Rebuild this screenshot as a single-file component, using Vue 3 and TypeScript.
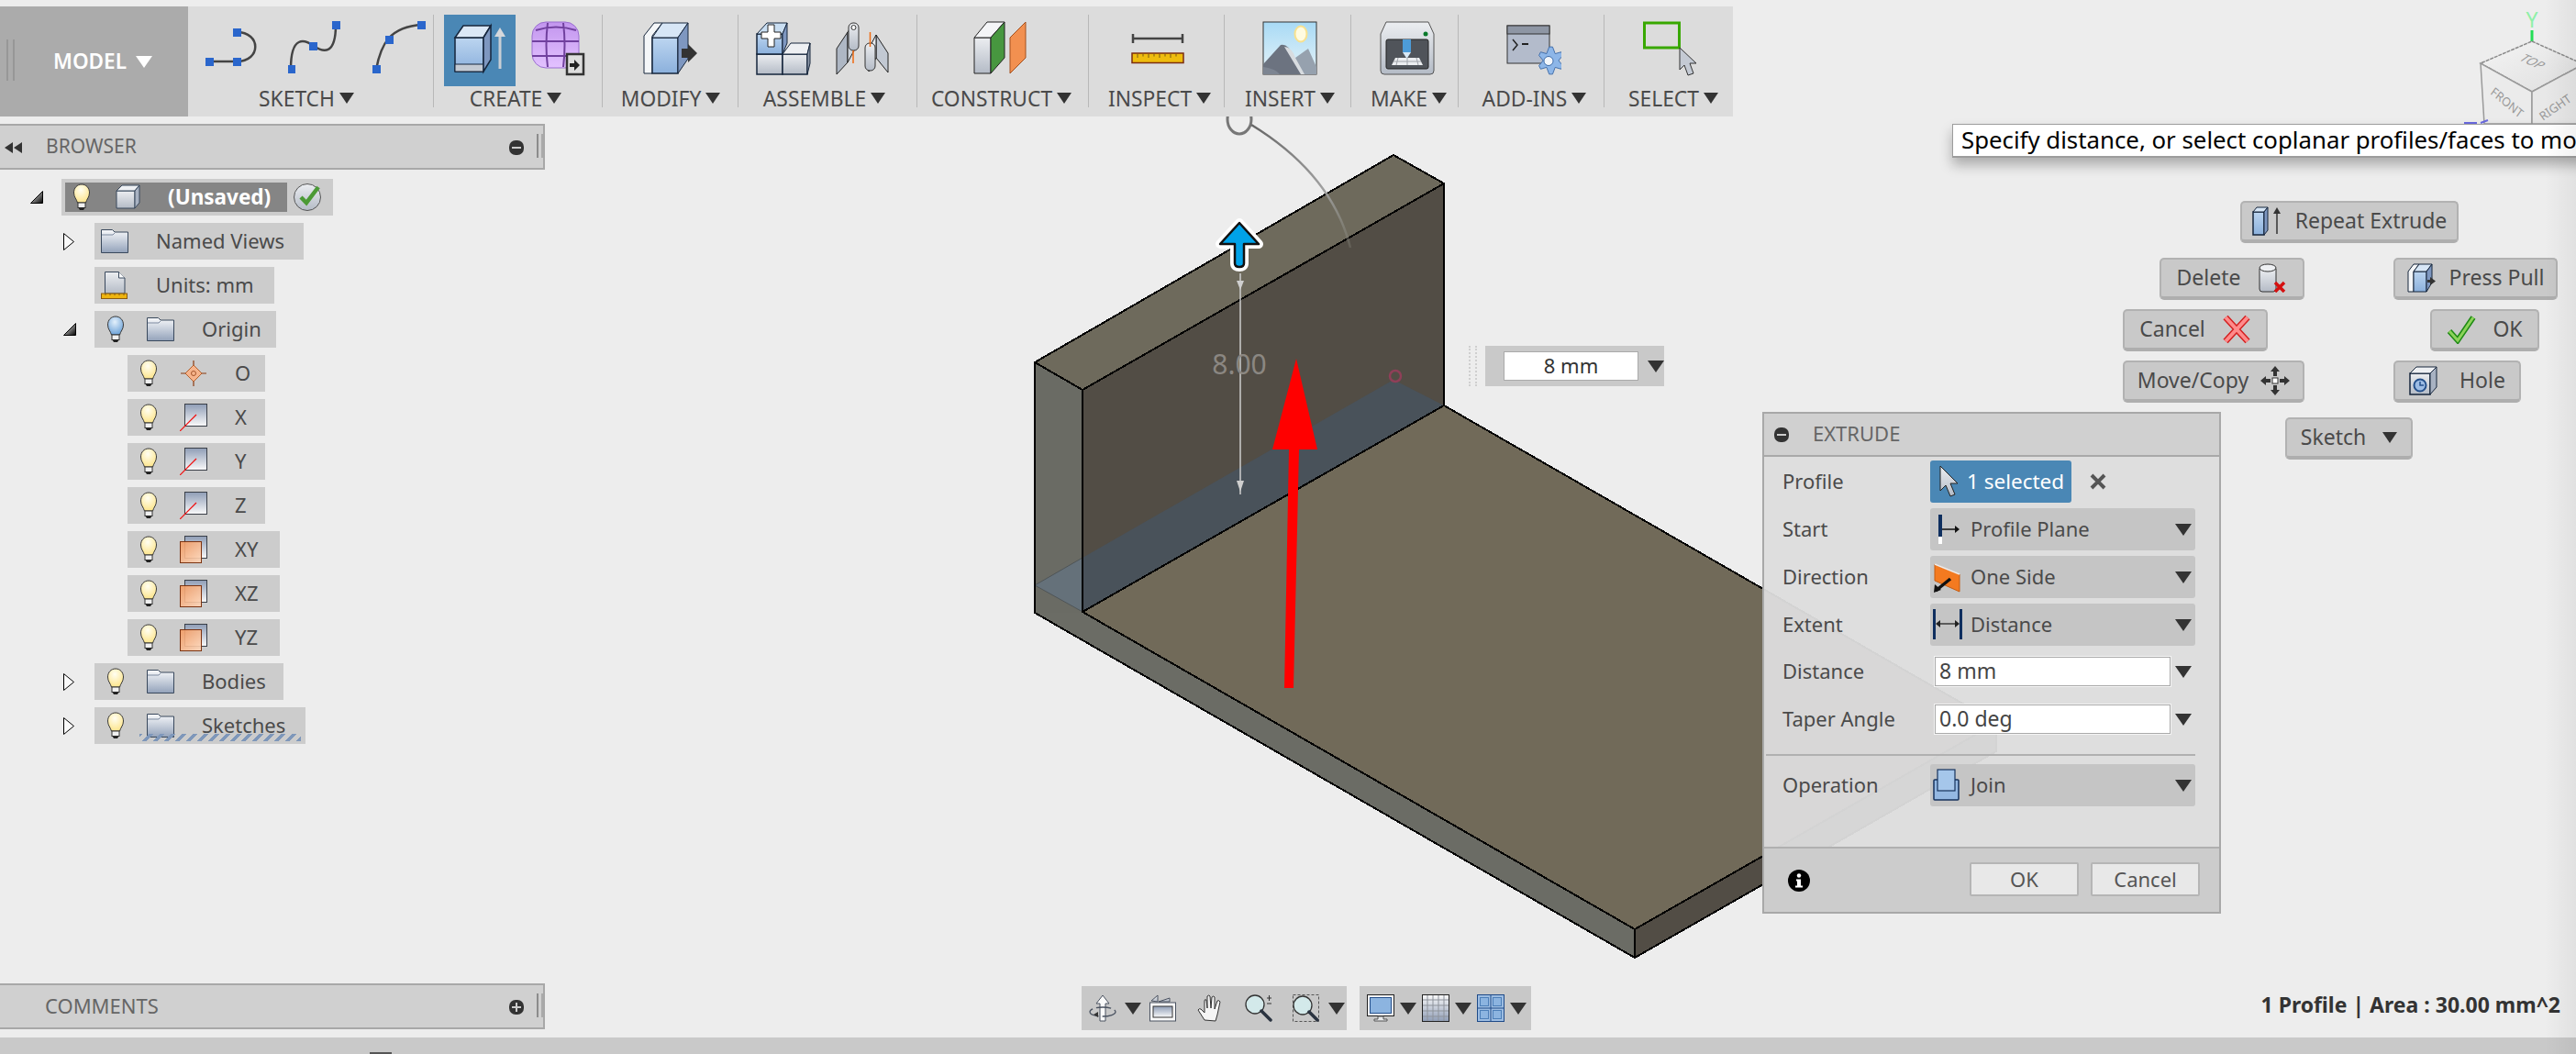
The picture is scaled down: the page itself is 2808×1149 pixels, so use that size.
<script setup lang="ts">
interface ToolGroup {
  label: string
  width: number
  offset: number
  gap: number
  shift: number
  icons: string[]
  active?: boolean
}

interface TreeRow {
  depth: number
  label: string
  width: number
  icon: string
  arrow?: 'open' | 'closed'
  bulb?: 'on' | 'blue'
  dashed?: boolean
}

interface MenuItem {
  label: string
  x: number
  y: number
  w: number
  gap: number
  icon?: string
  iconFirst?: boolean
}

const tools: ToolGroup[] = [
  { label: 'SKETCH', width: 268, offset: 18, gap: 31, shift: -5, icons: ['sk-line', 'sk-spline', 'sk-arc'] },
  { label: 'CREATE', width: 184, offset: 11, gap: 17, shift: -3, icons: ['extrude', 'form'], active: true },
  { label: 'MODIFY', width: 148, offset: 44, gap: 0, shift: 0, icons: ['modify'] },
  { label: 'ASSEMBLE', width: 195, offset: 19, gap: 27, shift: -4, icons: ['add', 'joint'] },
  { label: 'CONSTRUCT', width: 187, offset: 61, gap: 0, shift: -2, icons: ['construct'] },
  { label: 'INSPECT', width: 148, offset: 46, gap: 0, shift: 3, icons: ['inspect'] },
  { label: 'INSERT', width: 138, offset: 41, gap: 0, shift: 2, icons: ['insert'] },
  { label: 'MAKE', width: 117, offset: 31, gap: 0, shift: 4, icons: ['make'] },
  { label: 'ADD-INS', width: 159, offset: 52, gap: 0, shift: 3, icons: ['addin'] },
  { label: 'SELECT', width: 140, offset: 42, gap: 0, shift: 5, icons: ['select'] }
]

const tree: TreeRow[] = [
  { depth: 1, label: 'Named Views', width: 228, icon: 'folder', arrow: 'closed' },
  { depth: 1, label: 'Units: mm', width: 196, icon: 'units' },
  { depth: 1, label: 'Origin', width: 198, icon: 'folder', arrow: 'open', bulb: 'blue' },
  { depth: 2, label: 'O', width: 150, icon: 'point', bulb: 'on' },
  { depth: 2, label: 'X', width: 150, icon: 'axis', bulb: 'on' },
  { depth: 2, label: 'Y', width: 150, icon: 'axis', bulb: 'on' },
  { depth: 2, label: 'Z', width: 150, icon: 'axis', bulb: 'on' },
  { depth: 2, label: 'XY', width: 166, icon: 'plane', bulb: 'on' },
  { depth: 2, label: 'XZ', width: 166, icon: 'plane', bulb: 'on' },
  { depth: 2, label: 'YZ', width: 166, icon: 'plane', bulb: 'on' },
  { depth: 1, label: 'Bodies', width: 206, icon: 'folder', arrow: 'closed', bulb: 'on' },
  { depth: 1, label: 'Sketches', width: 230, icon: 'folder', arrow: 'closed', bulb: 'on', dashed: true }
]

const menu: MenuItem[] = [
  { label: 'Repeat Extrude', x: 2442, y: 219, w: 238, gap: 15, icon: 'm-repeat', iconFirst: true },
  { label: 'Delete', x: 2354, y: 281, w: 158, gap: 19, icon: 'm-delete' },
  { label: 'Press Pull', x: 2609, y: 281, w: 179, gap: 14, icon: 'm-press', iconFirst: true },
  { label: 'Cancel', x: 2314, y: 337, w: 158, gap: 18, icon: 'm-cancel' },
  { label: 'OK', x: 2649, y: 337, w: 119, gap: 18, icon: 'm-ok', iconFirst: true },
  { label: 'Move/Copy', x: 2314, y: 393, w: 198, gap: 13, icon: 'm-move' },
  { label: 'Hole', x: 2609, y: 393, w: 139, gap: 23, icon: 'm-hole', iconFirst: true },
  { label: 'Sketch', x: 2491, y: 455, w: 139, gap: 18 }
]

const selects = [
  { label: 'Start', value: 'Profile Plane', icon: 'e-start' },
  { label: 'Direction', value: 'One Side', icon: 'e-side' },
  { label: 'Extent', value: 'Distance', icon: 'e-dist' }
]
</script>

<template>
  <div class="app">
    <!-- shared icon sprite -->
    <svg class="sprite" width="0" height="0">
      <defs>
        <radialGradient id="gBulbY" cx="0.45" cy="0.3" r="0.7"><stop offset="0" stop-color="#fffef2" /><stop offset="1" stop-color="#fde58c" /></radialGradient>
        <radialGradient id="gBulbB" cx="0.45" cy="0.3" r="0.7"><stop offset="0" stop-color="#e3f0fb" /><stop offset="1" stop-color="#6ea3d8" /></radialGradient>
        <linearGradient id="gFolder" x1="0" y1="0" x2="0" y2="1"><stop offset="0" stop-color="#f8f9fb" /><stop offset="1" stop-color="#93a2ba" /></linearGradient>
        <linearGradient id="gPlane" x1="0" y1="0" x2="0" y2="1"><stop offset="0" stop-color="#8f9db6" /><stop offset="1" stop-color="#fafafa" /></linearGradient>
        <linearGradient id="gOrange" x1="0" y1="0" x2="1" y2="1"><stop offset="0" stop-color="#f39a60" /><stop offset="1" stop-color="#fcd6ba" /></linearGradient>
        <linearGradient id="gBlue" x1="0" y1="0" x2="0" y2="1"><stop offset="0" stop-color="#bcd5f0" /><stop offset="1" stop-color="#8bb0dc" /></linearGradient>
        <linearGradient id="gGray" x1="0" y1="0" x2="0" y2="1"><stop offset="0" stop-color="#eceef1" /><stop offset="1" stop-color="#b4bbc6" /></linearGradient>
        <linearGradient id="gPurple" x1="0" y1="0" x2="0" y2="1"><stop offset="0" stop-color="#c295ee" /><stop offset="1" stop-color="#e3c2ff" /></linearGradient>
        <linearGradient id="gSky" x1="0" y1="0" x2="0" y2="1"><stop offset="0" stop-color="#a8daf5" /><stop offset="1" stop-color="#e6f3f8" /></linearGradient>
        <linearGradient id="gTri" x1="0" y1="0" x2="1" y2="1"><stop offset="0" stop-color="#fff" /><stop offset="1" stop-color="#000" /></linearGradient>
        <linearGradient id="gCube" x1="0" y1="0" x2="1" y2="1"><stop offset="0" stop-color="#f4f4f4" /><stop offset="1" stop-color="#dedede" /></linearGradient>
        <linearGradient id="gCurve" gradientUnits="userSpaceOnUse" x1="1364" y1="136" x2="1472" y2="270">
          <stop offset="0" stop-color="#666" />
          <stop offset="0.6" stop-color="#a0a0a0" />
          <stop offset="1" stop-color="#8a8a80" stop-opacity=".3" />
        </linearGradient>
      </defs>

      <!-- tree icons -->
      <symbol id="bulb-on" viewBox="0 0 20 30">
        <path d="M10 1C5 1 1.500 5 1.500 10c0 5 3 7 4 11h9c1-4 4-6 4-11C18.500 5 15 1 10 1z" fill="url(#gBulbY)" stroke="#3a3a3a" />
        <rect x="6" y="21" width="8" height="5.500" fill="#f0f0f0" stroke="#333" />
        <path d="M6.500 26.500h7L12 29H8z" fill="#222" />
      </symbol>
      <symbol id="bulb-blue" viewBox="0 0 20 30">
        <path d="M10 1C5 1 1.500 5 1.500 10c0 5 3 7 4 11h9c1-4 4-6 4-11C18.500 5 15 1 10 1z" fill="url(#gBulbB)" stroke="#3a3a3a" />
        <rect x="6" y="21" width="8" height="5.500" fill="#f0f0f0" stroke="#333" />
        <path d="M6.500 26.500h7L12 29H8z" fill="#222" />
      </symbol>
      <symbol id="folder" viewBox="0 0 30 26">
        <path d="M.500 25.500V.500h12l2.500 2.500h14.500v22.500z" fill="url(#gFolder)" stroke="#39485c" />
        <path d="M1 6h12l2-2" fill="none" stroke="#7f8ba0" />
      </symbol>
      <symbol id="cube" viewBox="0 0 30 30">
        <path d="M4 8h20v19H4z" fill="url(#gGray)" stroke="#39485c" />
        <path d="M4 8l6-6h19l-5 6z" fill="#eef0f3" stroke="#39485c" />
        <path d="M24 8l5-6v19l-5 6z" fill="#a8b2c2" stroke="#39485c" />
      </symbol>
      <symbol id="units" viewBox="0 0 30 30">
        <path d="M4.500 24V.500h15L26 7v17z" fill="url(#gGray)" stroke="#39485c" />
        <path d="M19.500.500V7H26" fill="#fff" stroke="#39485c" />
        <rect x=".500" y="24" width="28" height="5.500" fill="#eeb40f" stroke="#8a5a10" />
        <path d="M5 24v2M10 24v2M15 24v2M20 24v2M25 24v2" stroke="#8a5a10" />
      </symbol>
      <symbol id="point" viewBox="0 0 30 30">
        <path d="M15 1v28M1 15h28" stroke="#8a3a10" stroke-width="1.200" />
        <path d="M15 6l9 9-9 9-9-9z" fill="#f6b48c" stroke="#b3602d" />
        <circle cx="15" cy="15" r="2.500" fill="none" stroke="#a4552a" />
      </symbol>
      <symbol id="axis" viewBox="0 0 30 30">
        <rect x="5.500" y=".500" width="24" height="24" fill="url(#gPlane)" stroke="#3a3f48" />
        <path d="M0 30L18 12" stroke="#f01010" stroke-width="1.200" />
      </symbol>
      <symbol id="plane" viewBox="0 0 30 30">
        <rect x="5.500" y=".500" width="24" height="24" fill="url(#gPlane)" stroke="#3a3f48" />
        <rect x=".500" y="6.500" width="23" height="23" fill="url(#gOrange)" fill-opacity=".9" stroke="#7c3412" />
      </symbol>

      <!-- toolbar icons -->
      <symbol id="sk-line" viewBox="0 0 60 60">
        <path d="M6 44H35C62 44 62 12 35 12" fill="none" stroke="#444" stroke-width="2.500" />
        <rect x="1" y="40" width="9" height="9" fill="#2a66cc" />
        <rect x="31" y="40" width="9" height="9" fill="#2a66cc" />
        <rect x="31" y="8" width="9" height="9" fill="#2a66cc" />
      </symbol>
      <symbol id="sk-spline" viewBox="0 0 60 60">
        <path d="M3 52C3 15 18 20 28 27 38 34 52 38 52 4" fill="none" stroke="#444" stroke-width="2.500" />
        <rect x="-1" y="48" width="9" height="9" fill="#2a66cc" />
        <rect x="23" y="23" width="9" height="9" fill="#2a66cc" />
        <rect x="48" y="0" width="9" height="9" fill="#2a66cc" />
      </symbol>
      <symbol id="sk-arc" viewBox="0 0 60 60">
        <path d="M5 53C10 25 20 6 55 4" fill="none" stroke="#444" stroke-width="2.500" />
        <rect x="1" y="48" width="9" height="9" fill="#2a66cc" />
        <rect x="15" y="16" width="9" height="9" fill="#2a66cc" />
        <rect x="50" y="0" width="9" height="9" fill="#2a66cc" />
      </symbol>
      <symbol id="extrude" viewBox="0 0 60 60">
        <path d="M3 16h31v37H3z" fill="url(#gBlue)" stroke="#16263c" stroke-width="1.500" />
        <path d="M3 45h31v8H3z" fill="#c4cad3" stroke="#16263c" />
        <path d="M3 16L12 3h30l-8 13z" fill="#dbe8f6" stroke="#16263c" stroke-width="1.500" />
        <path d="M34 16L42 3v37l-8 13z" fill="#7e97c0" stroke="#16263c" stroke-width="1.500" />
        <path d="M52 50V14" stroke="#c9ced4" stroke-width="3" />
        <path d="M46 15l6-10 6 10z" fill="#d5d8dc" />
      </symbol>
      <symbol id="form" viewBox="0 0 60 60">
        <rect x="1" y="1" width="51" height="50" rx="15" fill="url(#gPurple)" stroke="#9a6fd0" />
        <path d="M1 22h51M1 38h51M18 2q-3 24 0 48M35 2q3 24 0 48M5 10q22-7 44 0" fill="none" stroke="#70409e" stroke-width="2" />
        <rect x="39" y="36" width="18" height="22" fill="#ddd" stroke="#333" stroke-width="2.500" />
        <path d="M42 46h5v-4l6 6-6 6v-4h-5z" fill="#222" />
      </symbol>
      <symbol id="modify" viewBox="0 0 60 60">
        <path d="M1 57V16L12 2h9L10 16v41z" fill="#f4f6f8" stroke="#16263c" />
        <path d="M10 18h28v39H10z" fill="url(#gBlue)" stroke="#16263c" stroke-width="1.500" />
        <path d="M10 18L21 2h28L38 18z" fill="#d7e6f6" stroke="#16263c" />
        <path d="M38 18L49 2v39L38 57z" fill="#7e97c0" stroke="#16263c" />
        <path d="M42 30h7v-5l10 10-10 10v-5h-7z" fill="#333" />
      </symbol>
      <symbol id="add" viewBox="0 0 60 60">
        <path d="M1 36h28v22H1z" fill="url(#gGray)" stroke="#16263c" stroke-width="1.500" />
        <path d="M29 36h27v22H29z" fill="url(#gGray)" stroke="#16263c" stroke-width="1.500" />
        <path d="M29 36l9-12h21l-3 12z" fill="#eef0f3" stroke="#16263c" />
        <path d="M56 36l3-12v22l-3 12z" fill="#8e99aa" stroke="#16263c" />
        <path d="M1 14h28v22H1z" fill="url(#gBlue)" stroke="#16263c" stroke-width="1.500" />
        <path d="M1 14L12 2h22L29 14z" fill="#c9def2" stroke="#16263c" />
        <path d="M29 14l5-12v22l-5 12z" fill="#7e97c0" stroke="#16263c" />
        <path d="M6 12h7V4h7v8h7v7h-7v9h-7v-9H6z" fill="#fff" stroke="#222" />
      </symbol>
      <symbol id="joint" viewBox="0 0 60 60">
        <path d="M1 30L13 12v33L1 58z" fill="#aeb7c4" stroke="#222" />
        <path d="M13 12L20 2v30l-7 13z" fill="#cfd5dc" stroke="#222" />
        <rect x="14" y="2" width="11" height="30" rx="5" fill="url(#gGray)" stroke="#333" />
        <circle cx="19.500" cy="7" r="2.500" fill="#fff" stroke="#333" />
        <path d="M19 32v14" stroke="#f06a10" stroke-width="1.500" />
        <path d="M44 15L57 35v21L44 40z" fill="#c2c9d3" stroke="#222" />
        <path d="M44 15L36 30v25l8-15z" fill="#e6e9ed" stroke="#222" />
        <rect x="32" y="24" width="11" height="30" rx="5" fill="url(#gGray)" stroke="#333" />
        <path d="M37.500 12v16" stroke="#f06a10" stroke-width="1.500" />
      </symbol>
      <symbol id="construct" viewBox="0 0 60 60">
        <path d="M1 18v39h18V18z" fill="url(#gGray)" stroke="#222" />
        <path d="M1 18L15 1h19L19 18z" fill="#f4f5f7" stroke="#222" />
        <path d="M19 18L34 1v39L19 57z" fill="#47973f" stroke="#222" />
        <path d="M40 57V18L57 1v39z" fill="#f29050" stroke="#a3501f" />
      </symbol>
      <symbol id="inspect" viewBox="0 0 60 60">
        <path d="M2 14v10M56 14v10M2 19h54" stroke="#444" stroke-width="2.500" fill="none" />
        <rect x="1" y="35" width="56" height="10.500" fill="#eebc0e" stroke="#7a2d12" stroke-width="1.500" />
        <path d="M7 36v4M13 36v2.500M19 36v4M25 36v2.500M31 36v4M37 36v2.500M43 36v4M49 36v2.500" stroke="#7a5a12" />
      </symbol>
      <symbol id="insert" viewBox="0 0 60 60">
        <rect x="1" y="1" width="58" height="57" fill="url(#gSky)" stroke="#333" />
        <ellipse cx="42" cy="14" rx="6.500" ry="8.500" fill="#fffbe0" stroke="#f7e190" stroke-width="2" />
        <path d="M36 40L50 30l9 20v8H30z" fill="#96a1ae" />
        <path d="M1 47L20 26q8-2 14 12l9 20H1z" fill="#6c7380" />
        <path d="M24 28q8 0 12 12l10 18h-4L30 38z" fill="#d8dce0" />
        <path d="M1 58v-8q14 2 18 8z" fill="#7d8592" />
      </symbol>
      <symbol id="make" viewBox="0 0 60 60">
        <path d="M1 14L7 1h46l6 13v40q0 4-4 4H5q-4 0-4-4z" fill="url(#gGray)" stroke="#555" />
        <circle cx="50" cy="14" r="2.500" fill="#0a7a2c" />
        <rect x="7" y="20" width="46" height="32" rx="2" fill="#50545a" stroke="#222" />
        <rect x="25" y="20" width="9" height="14" fill="#4d9cd8" />
        <path d="M25 34h9l-4.500 7z" fill="#d8e8f4" />
        <path d="M13 48l4-8h26l4 8z" fill="#eceef0" />
        <path d="M20 40l-2 8M30 40v8M40 40l2 8M15 44h30" stroke="#a0a4aa" />
      </symbol>
      <symbol id="addin" viewBox="0 0 60 60">
        <rect x="1" y="5" width="46" height="41" fill="#b3bbcb" stroke="#333" />
        <rect x="1" y="5" width="46" height="9" fill="#8e96a4" stroke="#333" />
        <path d="M7 20l5 6-5 6" fill="none" stroke="#222" stroke-width="1.500" />
        <path d="M17 25h7" stroke="#222" stroke-width="2" />
        <path d="M44 35l3-8h4l3 8 7-2 2 4-5 6 5 6-2 4-7-2-3 8h-4l-3-8-7 2-2-4 5-6-5-6 2-4z" transform="translate(3 3) scale(.93)" fill="#8db6e8" stroke="#3d6ba8" />
        <circle cx="46" cy="43.500" r="5" fill="#f2f6fb" stroke="#3d6ba8" />
      </symbol>
      <symbol id="select" viewBox="0 0 60 60">
        <rect x="1.500" y="2" width="38" height="27" fill="none" stroke="#38a800" stroke-width="3" />
        <path d="M40 29V53L45 48L49 59L55 57L51 46H58Z" fill="#c4cad4" stroke="#333" />
      </symbol>

      <!-- marking menu icons -->
      <symbol id="m-repeat" viewBox="0 0 32 32">
        <path d="M1 6h12v25H1z" fill="url(#gBlue)" stroke="#16263c" stroke-width="1.500" />
        <path d="M1 6l4-5h12l-4 5z" fill="#d7e6f6" stroke="#16263c" />
        <path d="M13 6l4-5v25l-4 5z" fill="#7e97c0" stroke="#16263c" />
        <path d="M27 30V6" stroke="#333" stroke-width="1.500" />
        <path d="M23 8l4-7 4 7z" fill="#333" />
      </symbol>
      <symbol id="m-delete" viewBox="0 0 32 32">
        <path d="M2 6v22q0 3 3 3h12q3 0 3-3V6z" fill="url(#gGray)" stroke="#333" />
        <ellipse cx="11" cy="5" rx="9" ry="4" fill="#eef0f3" stroke="#333" />
        <path d="M19 21l10 10M29 21L19 31" stroke="#d51010" stroke-width="3.500" />
      </symbol>
      <symbol id="m-press" viewBox="0 0 32 32">
        <path d="M1 31V9l6-8h6L7 9v22z" fill="#f4f6f8" stroke="#16263c" />
        <path d="M7 9h14v22H7z" fill="url(#gBlue)" stroke="#16263c" />
        <path d="M7 9l6-8h14l-6 8z" fill="#d7e6f6" stroke="#16263c" />
        <path d="M21 9l6-8v20l-6 10z" fill="#7e97c0" stroke="#16263c" />
        <path d="M25 15v3h-3v3h3v3l6-4.500z" fill="#333" />
      </symbol>
      <symbol id="m-cancel" viewBox="0 0 32 32">
        <path d="M4 3l24 26M28 3L4 29" stroke="#d42020" stroke-width="7" />
        <path d="M4 3l24 26M28 3L4 29" stroke="#ff8b8b" stroke-width="4" />
      </symbol>
      <symbol id="m-ok" viewBox="0 0 32 32">
        <path d="M3 18l9 10L29 3" fill="none" stroke="#1e8a14" stroke-width="6" />
        <path d="M3 18l9 10L29 3" fill="none" stroke="#8cd35a" stroke-width="3" />
      </symbol>
      <symbol id="m-move" viewBox="0 0 32 32">
        <rect x="13" y="13" width="6" height="6" fill="#fff" stroke="#333" />
        <path d="M16 0l5 6h-3v5h-4V6h-3zM16 32l5-6h-3v-5h-4v5h-3zM0 16l6-5v3h5v4H6v3zM32 16l-6-5v3h-5v4h5v3z" fill="#333" />
      </symbol>
      <symbol id="m-hole" viewBox="0 0 32 32">
        <path d="M1 8h22v23H1z" fill="url(#gGray)" stroke="#16263c" stroke-width="1.500" />
        <path d="M1 8l7-7h22l-7 7z" fill="#eef0f3" stroke="#16263c" />
        <path d="M23 8l7-7v22l-7 8z" fill="#a8b2c2" stroke="#16263c" />
        <circle cx="12" cy="21" r="6.500" fill="#9cbce4" stroke="#24508c" stroke-width="2" />
        <path d="M12 17v4h4" fill="none" stroke="#24508c" stroke-width="1.500" />
      </symbol>

      <!-- extrude panel icons -->
      <symbol id="e-cursor" viewBox="0 0 20 36">
        <path d="M1 1v27l6-6 5 12 5-2-5-12h8z" fill="url(#gGray)" stroke="#222" />
      </symbol>
      <symbol id="e-start" viewBox="0 0 32 36">
        <rect x="6" y="2" width="4" height="32" fill="#0f2f5f" />
        <path d="M6 26h4v8H6z" fill="#fff" />
        <path d="M10 18h15" stroke="#111" stroke-width="1.500" />
        <path d="M24 14l5 4-5 4z" fill="#111" />
      </symbol>
      <symbol id="e-side" viewBox="0 0 32 36">
        <path d="M2 4l27 11v19L2 22z" fill="#f47a20" stroke="#c55b10" />
        <path d="M2 4l27 11" stroke="#eee" stroke-width="1.500" />
        <path d="M3 33l16-13" stroke="#111" stroke-width="3.500" />
        <path d="M1 35l1-9 7 6z" fill="#111" />
      </symbol>
      <symbol id="e-dist" viewBox="0 0 32 36">
        <rect x="0" y="1" width="3" height="33" fill="#0f2f5f" />
        <rect x="29" y="1" width="3" height="33" fill="#0f2f5f" />
        <path d="M4 17h24" stroke="#222" stroke-width="1.300" />
        <path d="M3 17l5-4v8zM29 17l-5-4v8z" fill="#222" />
      </symbol>
      <symbol id="e-join" viewBox="0 0 32 36">
        <rect x="1" y="12" width="27" height="22" rx="1" fill="#94b8e2" stroke="#16325c" stroke-width="1.500" />
        <rect x="5" y="1" width="19" height="23" fill="#a5c6ea" stroke="#16325c" stroke-width="1.200" />
      </symbol>

      <!-- bottom nav icons -->
      <symbol id="n-orbit" viewBox="0 0 30 30">
        <path d="M12 29V10H8l7-9 7 9h-4v19z" fill="#fafafa" stroke="#4a5260" />
        <ellipse cx="15" cy="19" rx="14" ry="5" fill="none" stroke="#4a5260" stroke-width="1.300" stroke-dasharray="16 4" />
        <path d="M5 22l5-3v6z" fill="#333" />
      </symbol>
      <symbol id="n-camera" viewBox="0 0 30 30">
        <path d="M2 7L9 1v7zM10 8l12-4v4z" fill="url(#gGray)" stroke="#4a5260" />
        <rect x=".500" y="9" width="28" height="20" fill="#fafafa" stroke="#4a5260" />
        <rect x="4" y="13" width="21" height="12" fill="url(#gPlane)" stroke="#333" />
      </symbol>
      <symbol id="n-hand" viewBox="0 0 30 30">
        <path d="M8 28L1 17q1-2 3-1l4 4V7q0-2 2-1l1 9V2q2-2 3 0l1 13 1-12q2-2 3 0l0 13 3-9q2-1 3 1l-3 14-2 7z" fill="#f4f4f4" stroke="#333" />
      </symbol>
      <symbol id="n-zoom" viewBox="0 0 30 30">
        <circle cx="11" cy="11" r="10" fill="#d3e9ea" stroke="#333" stroke-width="1.300" />
        <path d="M18 18l10 10" stroke="#2a3340" stroke-width="3.500" stroke-linecap="round" />
        <path d="M24 4h5M26.500 1v6M24 10h5" stroke="#333" />
      </symbol>
      <symbol id="n-fit" viewBox="0 0 30 30">
        <rect x=".500" y=".500" width="28" height="29" fill="none" stroke="#555" stroke-dasharray="3 2" />
        <circle cx="11" cy="12" r="10" fill="#d3e9ea" stroke="#333" stroke-width="1.300" />
        <path d="M18 19l9 9" stroke="#2a3340" stroke-width="3.500" stroke-linecap="round" />
      </symbol>
      <symbol id="n-monitor" viewBox="0 0 30 30">
        <rect x=".500" y=".500" width="29" height="23" fill="#f4f4f4" stroke="#222" />
        <rect x="3.500" y="3.500" width="23" height="17" fill="#8cb4e0" stroke="#24508c" />
        <path d="M12 24h6v3h4v2H8v-2h4z" fill="#e6e8ea" stroke="#555" />
      </symbol>
      <symbol id="n-grid" viewBox="0 0 30 30">
        <rect x=".500" y=".500" width="29" height="29" fill="url(#gPlane)" transform="rotate(180 15 15)" stroke="#222" />
        <path d="M6 1v28M12 1v28M18 1v28M24 1v28M1 6h28M1 12h28M1 18h28M1 24h28" stroke="#8e939b" />
      </symbol>
      <symbol id="n-views" viewBox="0 0 30 30">
        <rect x=".500" y=".500" width="29" height="29" fill="#9dbde2" stroke="#1e4a88" />
        <path d="M15 1v28M1 15h28" stroke="#1e4a88" />
        <rect x="3.500" y="3.500" width="9" height="9" fill="#8cb4e0" stroke="#4d7fb8" />
        <rect x="17.500" y="3.500" width="9" height="9" fill="#8cb4e0" stroke="#4d7fb8" />
        <rect x="3.500" y="17.500" width="9" height="9" fill="#8cb4e0" stroke="#4d7fb8" />
        <rect x="17.500" y="17.500" width="9" height="9" fill="#8cb4e0" stroke="#4d7fb8" />
      </symbol>
    </svg>

    <!-- 3D canvas, behind every panel -->
    <svg class="canvas" viewBox="0 0 2808 1149" width="2808" height="1149">
      <polygon points="1128,395 1519,169 1574,200 1180,425" fill="#6e6a5c" />
      <polygon points="1128,395 1180,425 1180,668 1128,668" fill="#6a6b64" />
      <polygon points="1180,425 1574,200 1574,442 1180,667" fill="#524d45" />
      <polygon points="1128,668 1182,668 1782,1013 1782,1044" fill="#6b6c65" />
      <polygon points="1782,1013 2176,788 2176,819 1782,1044" fill="#524d45" />
      <polygon points="1180,667 1574,442 2176,788 1782,1013" fill="#716a59" />
      <polygon points="1128,638 1180,608 1180,667" fill="#65717a" />
      <polygon points="1180,608 1519,414 1574,442 1180,667" fill="#49525a" />
      <path d="M1128 638L1182 668M1128 638L1180 608" stroke="#3f4448" stroke-opacity=".6" />
      <path
        d="M1128 395L1519 169L1574 200V442L2176 788V819L1782 1044L1128 668ZM1128 395L1180 425L1574 200M1180 425V667L1574 442M1180 667L1782 1013L2176 788M1782 1013V1044"
        fill="none"
        stroke="#000"
        stroke-width="2"
        shape-rendering="crispEdges"
      />
      <circle cx="1521" cy="410" r="6" fill="none" stroke="#8f3f58" stroke-width="2.500" />

      <ellipse cx="1351" cy="130" rx="13" ry="16" fill="none" stroke="#777" stroke-width="3" />
      <path d="M1364 136Q1452 190 1472 270" fill="none" stroke="url(#gCurve)" stroke-width="2.500" />

      <path d="M1352 298V539" stroke="#cfcfcf" stroke-width="1.500" />
      <path d="M1348 306l4 10 4-10zM1348 524l4 12 4-12z" fill="#cfcfcf" />
      <text x="1351" y="408" class="dim">8.00</text>

      <path d="M1351 243l21 23h-16v21q0 4-5 4t-5-4V266h-16z" fill="#fff" stroke="#fff" stroke-width="10" stroke-linejoin="round" />
      <path d="M1351 243l21 23h-16v21q0 4-5 4t-5-4V266h-16z" fill="#00a2e8" stroke="#111" stroke-width="2.500" stroke-linejoin="round" />

      <polygon points="1413,391 1436,490 1416,490 1410,750 1400,750 1405,490 1387,490" fill="#ff0000" />

      <!-- view cube -->
      <text x="2760" y="30" class="axis-y">Y</text>
      <path d="M2760 33V45" stroke="#22dd55" stroke-width="3" />
      <path d="M2760 45L2816 70L2760 100L2704 69Z" fill="url(#gCube)" stroke="#8a8a8a" stroke-width="1.500" stroke-dasharray="4 1" />
      <path d="M2704 69L2708 135H2760V100Z" fill="#ebebeb" stroke="#9a9a9a" stroke-width="1.500" />
      <path d="M2760 100L2816 70V135H2760Z" fill="#e8e8e8" stroke="#9a9a9a" stroke-width="1.500" />
      <text x="0" y="0" class="cube-text" transform="translate(2745 65) rotate(25) skewX(-30)">TOP</text>
      <text x="0" y="0" class="cube-text" transform="translate(2714 102) rotate(35) skewY(5)">FRONT</text>
      <text x="0" y="0" class="cube-text" transform="translate(2772 132) rotate(-35)">RIGHT</text>
      <path d="M2686 134H2700M2704 134L2712 131" stroke="#6a6ae0" stroke-width="2" />
    </svg>

    <header class="toolbar">
      <div class="model-tab">
        <span class="grip"></span>
        <span class="model-label">MODEL</span>
        <span class="tri tri-white"></span>
      </div>
      <div
        v-for="group in tools"
        :key="group.label"
        class="tool-group"
        :style="{ width: group.width + 'px' }"
      >
        <div class="tool-icons" :style="{ paddingLeft: group.offset + 'px', gap: group.gap + 'px' }">
          <div
            v-for="icon in group.icons"
            :key="icon"
            class="tool-icon"
            :class="{ 'is-active': group.active && icon === 'extrude' }"
          >
            <svg width="60" height="60"><use :href="'#' + icon" /></svg>
          </div>
        </div>
        <div class="tool-label" :style="{ transform: `translateX(${group.shift}px)` }">
          <span>{{ group.label }}</span>
          <span class="tri"></span>
        </div>
      </div>
    </header>

    <div class="workspace">
      <aside class="side">
        <div class="dock">
          <svg class="back" width="20" height="12" viewBox="0 0 20 12"><path d="M0 6l9-6v12zM10 6l9-6v12z" fill="#333" /></svg>
          <span class="dock-title">BROWSER</span>
          <span class="round-btn"><i></i></span>
          <span class="dock-grip"></span>
        </div>

        <div class="tree">
          <div class="tree-row">
            <span class="arrow-slot">
              <svg width="14" height="14" viewBox="0 0 14 14"><path d="M13.500 .500v13H.500z" fill="url(#gTri)" stroke="#000" /></svg>
            </span>
            <div class="root-chip">
              <div class="root-inner">
                <span class="bulb-slot"><svg width="20" height="30"><use href="#bulb-on" /></svg></span>
                <span class="icon-slot"><svg width="30" height="30"><use href="#cube" /></svg></span>
                <span class="root-name">(Unsaved)</span>
              </div>
              <svg class="root-check" width="32" height="32" viewBox="0 0 32 32">
                <circle cx="16" cy="16" r="14.500" fill="url(#gGray)" stroke="#555" />
                <path d="M9 16l6 6L28 5" fill="none" stroke="#4b9a36" stroke-width="4.500" />
              </svg>
            </div>
          </div>

          <div v-for="row in tree" :key="row.label" class="tree-row" :style="{ paddingLeft: 32 + row.depth * 36 + 'px' }">
            <span class="arrow-slot">
              <svg v-if="row.arrow === 'open'" width="14" height="14" viewBox="0 0 14 14"><path d="M13.500 .500v13H.500z" fill="url(#gTri)" stroke="#000" /></svg>
              <svg v-else-if="row.arrow === 'closed'" width="13" height="19" viewBox="0 0 13 19"><path d="M.500 .500l11 9-11 9z" fill="#fafafa" stroke="#000" /></svg>
            </span>
            <div class="chip" :style="{ width: row.width + 'px' }">
              <span v-if="row.bulb" class="bulb-slot"><svg width="20" height="30"><use :href="'#bulb-' + row.bulb" /></svg></span>
              <span class="icon-slot"><svg width="30" height="30"><use :href="'#' + row.icon" /></svg></span>
              <span class="chip-text">{{ row.label }}</span>
              <span v-if="row.dashed" class="dashes"></span>
            </div>
          </div>
        </div>

        <div class="dock dock-bottom">
          <span class="dock-title">COMMENTS</span>
          <span class="round-btn is-plus"><i></i></span>
          <span class="dock-grip"></span>
        </div>
      </aside>

      <div class="bottom-row">
        <div class="nav-box">
          <svg class="nav-icon" width="30" height="30"><use href="#n-orbit" /></svg>
          <span class="tri tri-big"></span>
          <svg class="nav-icon" width="30" height="30"><use href="#n-camera" /></svg>
          <svg class="nav-icon" width="30" height="30"><use href="#n-hand" /></svg>
          <svg class="nav-icon" width="30" height="30"><use href="#n-zoom" /></svg>
          <svg class="nav-icon" width="30" height="30"><use href="#n-fit" /></svg>
          <span class="tri tri-big"></span>
        </div>
        <div class="nav-box nav-box-two">
          <svg width="30" height="30"><use href="#n-monitor" /></svg>
          <span class="tri tri-big"></span>
          <svg width="30" height="30"><use href="#n-grid" /></svg>
          <span class="tri tri-big"></span>
          <svg width="30" height="30"><use href="#n-views" /></svg>
          <span class="tri tri-big"></span>
        </div>
        <div class="status-text">1 Profile | Area : 30.00 mm^2</div>
      </div>
    </div>

    <footer class="statusbar"><span class="nub"></span></footer>

    <!-- floating on-canvas widgets -->
    <div class="value-box">
      <span class="value-grip"></span>
      <div class="value-field">
        <div class="value-input">8 mm</div>
        <span class="tri tri-big"></span>
      </div>
    </div>

    <div class="tooltip">Specify distance, or select coplanar profiles/faces to move</div>

    <button
      v-for="item in menu"
      :key="item.label"
      class="menu-btn"
      :style="{ left: item.x + 'px', top: item.y + 'px', width: item.w + 'px', gap: item.gap + 'px' }"
    >
      <svg v-if="item.icon && item.iconFirst" width="32" height="32"><use :href="'#' + item.icon" /></svg>
      <span class="menu-text">{{ item.label }}</span>
      <svg v-if="item.icon && !item.iconFirst" width="32" height="32"><use :href="'#' + item.icon" /></svg>
      <span v-if="!item.icon" class="tri"></span>
    </button>

    <section class="panel">
      <div class="panel-head">
        <span class="round-btn"><i></i></span>
        <span class="dock-title">EXTRUDE</span>
      </div>
      <div class="panel-body">
        <div class="field">
          <label>Profile</label>
          <div class="picked">
            <svg width="20" height="36"><use href="#e-cursor" /></svg>
            <span>1 selected</span>
          </div>
          <svg class="clear" width="18" height="18" viewBox="0 0 18 18"><path d="M2 2l14 14M16 2L2 16" stroke="#555" stroke-width="4" /></svg>
        </div>
        <div v-for="s in selects" :key="s.label" class="field">
          <label>{{ s.label }}</label>
          <div class="select">
            <svg width="32" height="36"><use :href="'#' + s.icon" /></svg>
            <span class="select-text">{{ s.value }}</span>
            <span class="tri tri-big"></span>
          </div>
        </div>
        <div class="field field-input">
          <label>Distance</label>
          <div class="text-input">8 mm</div>
          <span class="tri tri-big"></span>
        </div>
        <div class="field field-input field-taper">
          <label>Taper Angle</label>
          <div class="text-input">0.0 deg</div>
          <span class="tri tri-big"></span>
        </div>
        <div class="divider"></div>
        <div class="field">
          <label>Operation</label>
          <div class="select">
            <svg width="32" height="36"><use href="#e-join" /></svg>
            <span class="select-text">Join</span>
            <span class="tri tri-big"></span>
          </div>
        </div>
      </div>
      <div class="panel-foot">
        <svg width="24" height="24" viewBox="0 0 24 24">
          <circle cx="12" cy="12" r="12" fill="#000" />
          <circle cx="12" cy="6.500" r="2.200" fill="#fff" />
          <path d="M9 10.500h5v7h2v2H8v-2h2v-5H9z" fill="#fff" />
        </svg>
        <button class="foot-btn">OK</button>
        <button class="foot-btn">Cancel</button>
      </div>
    </section>
  </div>
</template>

<style scoped>
.app {
  position: relative;
  width: 2808px;
  height: 1149px;
  overflow: hidden;
  display: flex;
  flex-direction: column;
  background: #ededed;
  color: #4a4a4a;
  font-family: "Noto Sans", "Open Sans", sans-serif;
  font-size: 22px;
}

/* faint darkening along the right edge of the window */
.app::after {
  content: '';
  position: absolute;
  z-index: 5;
  top: 0;
  right: 0;
  bottom: 0;
  width: 34px;
  background: linear-gradient(to right, rgba(0, 0, 0, 0), rgba(0, 0, 0, 0.05));
  pointer-events: none;
}

.sprite {
  position: absolute;
}

.canvas {
  position: absolute;
  top: 0;
  left: 0;
}

.dim {
  font-size: 30px;
  fill: #8b8782;
  text-anchor: middle;
}

.axis-y {
  font-size: 23px;
  fill: #8ff0a8;
  text-anchor: middle;
}

.cube-text {
  font-size: 13px;
  fill: #9a9a9a;
}

.tri {
  display: inline-block;
  width: 0;
  height: 0;
  flex-shrink: 0;
  border-left: 8px solid transparent;
  border-right: 8px solid transparent;
  border-top: 12px solid #333;
}

.tri-big {
  border-left-width: 9px;
  border-right-width: 9px;
  border-top-width: 13px;
}

.tri-white {
  border-top-color: #fff;
  border-left-width: 9px;
  border-right-width: 9px;
  border-top-width: 13px;
}

/* ===== toolbar ===== */
.toolbar {
  position: relative;
  z-index: 1;
  display: flex;
  width: 1889px;
  height: 120px;
  margin-top: 7px;
  background: #dcdcdc;
  flex-shrink: 0;
}

.model-tab {
  position: relative;
  width: 205px;
  display: flex;
  align-items: center;
  padding-left: 58px;
  gap: 10px;
  box-sizing: border-box;
  background: #ababab;
  color: #fff;
}

.model-label {
  font-weight: 600;
  font-size: 22.500px;
  padding-bottom: 2px;
}

.grip {
  position: absolute;
  left: 7px;
  top: 36px;
  width: 5px;
  height: 45px;
  border-left: 2px solid #979797;
  border-right: 2px solid #979797;
}

.tool-group {
  position: relative;
  box-sizing: border-box;
  padding-top: 9px;
  flex-shrink: 0;
}

.tool-group::after {
  content: '';
  position: absolute;
  right: 0;
  top: 9px;
  bottom: 10px;
  width: 1.500px;
  background: #b8b8b8;
}

.tool-group:last-child::after {
  display: none;
}

.tool-icons {
  display: flex;
  align-items: center;
  height: 78px;
}

.tool-icon {
  height: 60px;
  margin-top: -4px;
}

.tool-icon.is-active {
  display: flex;
  align-items: center;
  justify-content: center;
  width: 78px;
  height: 78px;
  margin-top: 0;
  background: #4a87b5;
}

.tool-label {
  display: flex;
  align-items: center;
  justify-content: center;
  gap: 5px;
  height: 24px;
  margin-top: 1px;
  color: #4a4a4a;
  font-size: 22.800px;
  white-space: nowrap;
}

/* ===== left side ===== */
.workspace {
  position: relative;
  z-index: 1;
  flex: 1;
  display: flex;
  min-height: 0;
}

.side {
  width: 594px;
  flex-shrink: 0;
  display: flex;
  flex-direction: column;
  padding: 8px 0 9px;
  box-sizing: border-box;
}

.dock {
  position: relative;
  display: flex;
  align-items: center;
  height: 50px;
  padding-left: 50px;
  box-sizing: border-box;
  background: #d0d0d0;
  border-top: 2px solid #a8a8a8;
  border-bottom: 2px solid #a8a8a8;
  border-right: 2px solid #a8a8a8;
  flex-shrink: 0;
}

.dock-bottom {
  margin-top: auto;
  padding-left: 49px;
}

.back {
  position: absolute;
  left: 5px;
  top: 18px;
}

.dock-title {
  color: #666;
  font-size: 21px;
  padding-bottom: 3px;
}

.dock-bottom .dock-title,
.panel-head .dock-title {
  font-size: 22px;
}

.round-btn {
  position: relative;
  display: block;
  width: 16px;
  height: 16px;
  border-radius: 7px;
  background: #333;
  flex-shrink: 0;
}

.round-btn i {
  position: absolute;
  left: 3px;
  right: 3px;
  top: 7px;
  height: 2px;
  background: #ccc;
}

.is-plus::after {
  content: '';
  position: absolute;
  left: 7px;
  top: 3px;
  bottom: 3px;
  width: 2px;
  background: #ccc;
}

.dock .round-btn {
  position: absolute;
  left: 555px;
  top: 16px;
}

.dock-grip {
  position: absolute;
  left: 585px;
  top: 9px;
  width: 3px;
  height: 26px;
  border-left: 2px solid #8c8c8c;
  border-right: 2px solid #aaa;
}

.tree {
  display: flex;
  flex-direction: column;
  gap: 8px;
  padding-top: 10px;
}

.tree-row {
  display: flex;
  align-items: center;
  padding-left: 32px;
}

.arrow-slot {
  display: flex;
  align-items: center;
  width: 35px;
  flex-shrink: 0;
}

.tree-row > .arrow-slot svg {
  margin-left: 1px;
}

.root-chip {
  display: flex;
  align-items: center;
  width: 296px;
  height: 40px;
  padding-left: 4px;
  box-sizing: border-box;
  background: #cccccc;
}

.root-inner {
  display: flex;
  align-items: center;
  width: 242px;
  height: 32px;
  padding-left: 2px;
  box-sizing: border-box;
  background: #858585;
}

.root-name {
  color: #fff;
  font-weight: 700;
  font-size: 22.500px;
  padding-bottom: 2px;
}

.root-check {
  margin-left: 6px;
}

.chip {
  position: relative;
  display: flex;
  align-items: center;
  height: 40px;
  padding-left: 7px;
  box-sizing: border-box;
  background: #cccccc;
  flex-shrink: 0;
}

.bulb-slot {
  display: flex;
  width: 50px;
  padding-left: 6px;
  box-sizing: border-box;
  flex-shrink: 0;
}

.icon-slot {
  display: flex;
  width: 60px;
  flex-shrink: 0;
}

.chip-text {
  white-space: nowrap;
  color: #4a4a4a;
  padding-bottom: 2px;
}

.dashes {
  position: absolute;
  left: 49px;
  right: 5px;
  bottom: 3px;
  height: 8px;
  background: repeating-linear-gradient(-45deg, #7e97ba 0 4px, transparent 4px 8.500px);
}

/* ===== bottom row ===== */
.bottom-row {
  flex: 1;
  display: flex;
  align-items: flex-end;
  padding: 0 17px 8px 585px;
  min-width: 0;
}

.nav-box {
  display: flex;
  align-items: center;
  gap: 9px;
  width: 289px;
  height: 48px;
  padding-left: 8px;
  box-sizing: border-box;
  background: #c8c8c8;
  flex-shrink: 0;
}

.nav-icon + .nav-icon {
  margin-left: 13px;
}

.nav-box-two {
  width: 187px;
  gap: 6px;
  margin-left: 14px;
}

.status-text {
  margin-left: auto;
  padding-bottom: 12px;
  color: #333;
  font-weight: 700;
  font-size: 23px;
  white-space: nowrap;
}

.statusbar {
  position: relative;
  z-index: 1;
  height: 18px;
  background: #c9c9c9;
  flex-shrink: 0;
}

.nub {
  position: absolute;
  left: 403px;
  bottom: 0;
  width: 24px;
  height: 2px;
  background: #555;
}

/* ===== floating widgets ===== */
.value-box {
  position: absolute;
  z-index: 2;
  left: 1601px;
  top: 377px;
  display: flex;
  align-items: stretch;
  height: 44px;
  gap: 9px;
}

.value-grip {
  width: 5px;
  border-left: 2px dotted #cfcfcf;
  border-right: 2px dotted #cfcfcf;
}

.value-field {
  display: flex;
  align-items: center;
  width: 195px;
  padding-left: 20px;
  box-sizing: border-box;
  background: #c9c9c9;
}

.value-input {
  width: 148px;
  height: 32px;
  line-height: 28px;
  box-sizing: border-box;
  border: 1px solid #aaa;
  background: #fff;
  text-align: center;
  color: #333;
  margin-right: 10px;
}

.tooltip {
  position: absolute;
  z-index: 3;
  left: 2128px;
  top: 135px;
  width: 720px;
  height: 37px;
  padding-left: 9px;
  box-sizing: border-box;
  border: 1px solid #9c9c9c;
  border-bottom-width: 2px;
  background: #fff;
  color: #000;
  font-size: 25.800px;
  line-height: 33px;
  white-space: nowrap;
  box-shadow: 0 8px 14px rgba(0, 0, 0, 0.28);
}

.menu-btn {
  position: absolute;
  z-index: 2;
  display: flex;
  align-items: center;
  justify-content: center;
  height: 46px;
  padding: 0;
  box-sizing: border-box;
  border: 2px solid #b2b2b2;
  border-bottom: 4px solid #aeaeae;
  border-radius: 5px;
  background: #c9c9c9;
  color: #4a4a4a;
  font-family: inherit;
  font-size: 23px;
  white-space: nowrap;
}

.menu-text {
  padding-bottom: 2px;
}

/* ===== extrude panel ===== */
.panel {
  position: absolute;
  z-index: 2;
  left: 1921px;
  top: 449px;
  width: 500px;
  height: 547px;
  display: flex;
  flex-direction: column;
  box-sizing: border-box;
  border: 2px solid #a8a8a8;
  background: rgba(220, 220, 220, 0.955);
}

.panel-head {
  display: flex;
  align-items: center;
  gap: 26px;
  height: 47px;
  padding-left: 11px;
  box-sizing: border-box;
  background: #d0d0d0;
  border-bottom: 2px solid #a8a8a8;
  flex-shrink: 0;
}

.panel-body {
  flex: 1;
  padding-top: 4px;
}

.field {
  display: flex;
  align-items: center;
  height: 46px;
  margin-bottom: 6px;
  padding-left: 20px;
}

.field label {
  width: 161px;
  flex-shrink: 0;
  padding-bottom: 2px;
}

.field-input {
  height: 32px;
  margin-top: 12px;
  margin-bottom: 0;
}

.field-taper {
  margin-top: 20px;
}

.picked {
  display: flex;
  align-items: center;
  gap: 10px;
  width: 154px;
  height: 46px;
  padding-left: 10px;
  box-sizing: border-box;
  border-radius: 3px;
  background: #4a87b5;
  color: #fff;
  font-size: 22.500px;
}

.picked span {
  padding-bottom: 2px;
}

.clear {
  margin-left: 20px;
}

.select {
  display: flex;
  align-items: center;
  gap: 9px;
  width: 289px;
  height: 46px;
  padding-left: 3px;
  padding-right: 4px;
  box-sizing: border-box;
  border-radius: 3px;
  background: #c5c5c5;
}

.select-text {
  padding-bottom: 2px;
}

.select .tri {
  margin-left: auto;
}

.text-input {
  width: 257px;
  height: 32px;
  margin-left: 5px;
  margin-right: 5px;
  padding-left: 4px;
  line-height: 28px;
  box-sizing: border-box;
  border: 1px solid #aaa;
  outline: 1px solid #f4f4f4;
  background: #fff;
  color: #444;
  font-size: 23px;
}

.divider {
  height: 2px;
  margin: 22px 26px 9px 2px;
  background: #b0b0b0;
}

.panel-foot {
  display: flex;
  align-items: center;
  height: 71px;
  padding: 0 21px 0 26px;
  gap: 13px;
  box-sizing: border-box;
  background: #cccccc;
  border-top: 2px solid #b0b0b0;
  flex-shrink: 0;
}

.panel-foot svg {
  margin-right: auto;
}

.foot-btn {
  width: 119px;
  height: 37px;
  padding: 0;
  margin-top: -3px;
  box-sizing: border-box;
  border: 2px solid #b5b5b5;
  border-radius: 2px;
  background: #e8e8e8;
  color: #555;
  font-family: inherit;
  font-size: 22px;
}
</style>
